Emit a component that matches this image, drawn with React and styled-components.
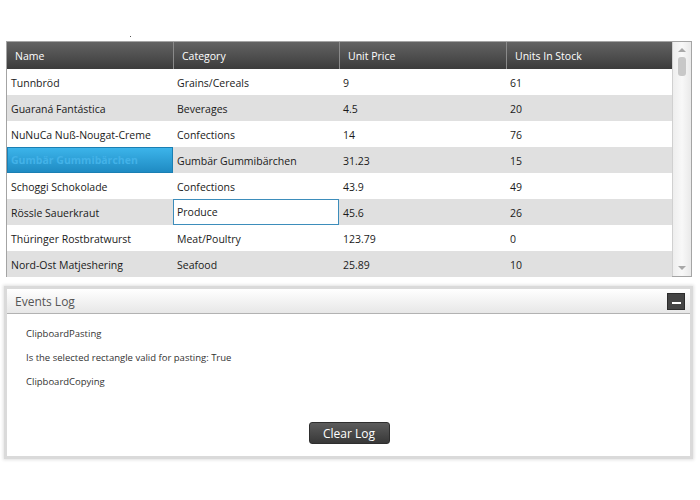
import React from "react";
import styled, { createGlobalStyle } from "styled-components";

const Global = createGlobalStyle`
  body {
    margin: 0;
    background: #fff;
    font-family: "Open Sans", "DejaVu Sans", sans-serif;
  }
`;

const Page = styled.div`
  width: 700px;
  height: 500px;
  padding: 41px 8px 0 4px;
  box-sizing: border-box;
  position: relative;
`;

const Dot = styled.span`
  position: absolute;
  left: 130px;
  top: 36px;
  width: 1px;
  height: 1px;
  background: #555;
`;

const Grid = styled.div`
  margin-left: 2px;
  width: 686px;
  height: 236px;
  border: 1px solid #a4a4a4;
  box-sizing: border-box;
  display: flex;
  background: #fff;
`;

const Table = styled.div`
  flex: 1;
  display: flex;
  flex-direction: column;
`;

const HeaderRow = styled.div`
  display: grid;
  grid-template-columns: 166px 166px 167px 166px;
  height: 27px;
  background: linear-gradient(#636363, #3c3c3c);
`;

const HeadCell = styled.div`
  color: #fff;
  font-size: 10.5px;
  line-height: 27px;
  padding: 1px 0 0 8px;
  box-sizing: border-box;
  border-left: ${(p) => (p.first ? "none" : "1px solid #8a8a8a")};
`;

const Row = styled.div`
  display: grid;
  grid-template-columns: 166px 166px 167px 166px;
  height: 26px;
  background: ${(p) => (p.alt ? "#e0e0e0" : "#fff")};
`;

const Cell = styled.div`
  font-size: 10.5px;
  line-height: 26px;
  padding: 1px 0 0 4px;
  color: #1a1a1a;
  white-space: nowrap;
  overflow: hidden;
  box-sizing: border-box;
  ${(p) =>
    p.selected &&
    `
    background: linear-gradient(#3cb4ea, #1f8bc3);
    color: #43b2e8;
    font-weight: bold;
    border: 1px solid #1a7fb3;
    line-height: 23px;
    padding-left: 3px;
  `}
  ${(p) =>
    p.current &&
    `
    background: #fff;
    border: 1px solid #3d8dbb;
    line-height: 23px;
    padding-left: 3px;
  `}
`;

const Scroll = styled.div`
  width: 19px;
  border-left: 1px solid #d0d0d0;
  background: linear-gradient(90deg, #eeeeee, #f8f8f8, #e9e9e9);
  display: flex;
  flex-direction: column;
  align-items: center;
  padding-top: 6px;
  box-sizing: border-box;
`;

const Arrow = styled.div`
  width: 0;
  height: 0;
  border-left: 4px solid transparent;
  border-right: 4px solid transparent;
  ${(p) => (p.down ? "border-top: 4px solid #a8a8a8;" : "border-bottom: 4px solid #a8a8a8;")}
  ${(p) => p.down && "margin-top: auto; margin-bottom: 6px;"}
`;

const Thumb = styled.div`
  margin-top: 5px;
  width: 8px;
  height: 19px;
  border-radius: 3px;
  background: #c8c8c8;
`;

const Panel = styled.div`
  margin-top: 9px;
  width: 689px;
  height: 173px;
  border: 3px solid #dadada;
  box-sizing: border-box;
  box-shadow: 0 0 3px 1px rgba(0, 0, 0, 0.12);
  display: flex;
  flex-direction: column;
  background: #fff;
`;

const PanelHead = styled.div`
  height: 24px;
  background: linear-gradient(#ffffff, #e7e7e7);
  border-bottom: 1px solid #b2b2b2;
  display: flex;
  align-items: center;
  justify-content: space-between;
  padding: 0 5px 0 8px;
`;

const Title = styled.span`
  font-size: 12px;
  color: #555;
`;

const MinBtn = styled.div`
  width: 16px;
  height: 15px;
  background: #444;
  border: 1px solid #2c2c2c;
  display: flex;
  align-items: center;
  justify-content: center;
  &::after {
    content: "";
    width: 9px;
    height: 2px;
    margin-top: 4px;
    background: #fff;
  }
`;

const Body = styled.div`
  flex: 1;
  display: flex;
  flex-direction: column;
  padding: 13px 0 0 19px;
`;

const LogLine = styled.div`
  font-size: 9.5px;
  color: #333;
  height: 24px;
  line-height: 14px;
`;

const ClearBtn = styled.button`
  align-self: center;
  margin: auto 0 12px -18px;
  width: 81px;
  height: 22px;
  border-radius: 3px;
  border: 1px solid #2e2e2e;
  background: linear-gradient(#5c5c5c, #383838);
  color: #fff;
  font-family: "Open Sans", sans-serif;
  font-size: 12px;
  padding: 0;
`;

const rows = [
  ["Tunnbröd", "Grains/Cereals", "9", "61"],
  ["Guaraná Fantástica", "Beverages", "4.5", "20"],
  ["NuNuCa Nuß-Nougat-Creme", "Confections", "14", "76"],
  ["Gumbär Gummibärchen", "Gumbär Gummibärchen", "31.23", "15"],
  ["Schoggi Schokolade", "Confections", "43.9", "49"],
  ["Rössle Sauerkraut", "Produce", "45.6", "26"],
  ["Thüringer Rostbratwurst", "Meat/Poultry", "123.79", "0"],
  ["Nord-Ost Matjeshering", "Seafood", "25.89", "10"],
];

export default function App() {
  return (
    <Page>
      <Global />
      <Dot />
      <Grid>
        <Table>
          <HeaderRow>
            <HeadCell first>Name</HeadCell>
            <HeadCell>Category</HeadCell>
            <HeadCell>Unit Price</HeadCell>
            <HeadCell>Units In Stock</HeadCell>
          </HeaderRow>
          {rows.map((r, i) => (
            <Row key={i} alt={i % 2 === 1}>
              {r.map((c, j) => (
                <Cell key={j} selected={i === 3 && j === 0} current={i === 5 && j === 1}>
                  {c}
                </Cell>
              ))}
            </Row>
          ))}
        </Table>
        <Scroll>
          <Arrow />
          <Thumb />
          <Arrow down />
        </Scroll>
      </Grid>
      <Panel>
        <PanelHead>
          <Title>Events Log</Title>
          <MinBtn />
        </PanelHead>
        <Body>
          <LogLine>ClipboardPasting</LogLine>
          <LogLine>Is the selected rectangle valid for pasting: True</LogLine>
          <LogLine>ClipboardCopying</LogLine>
          <ClearBtn>Clear Log</ClearBtn>
        </Body>
      </Panel>
    </Page>
  );
}
